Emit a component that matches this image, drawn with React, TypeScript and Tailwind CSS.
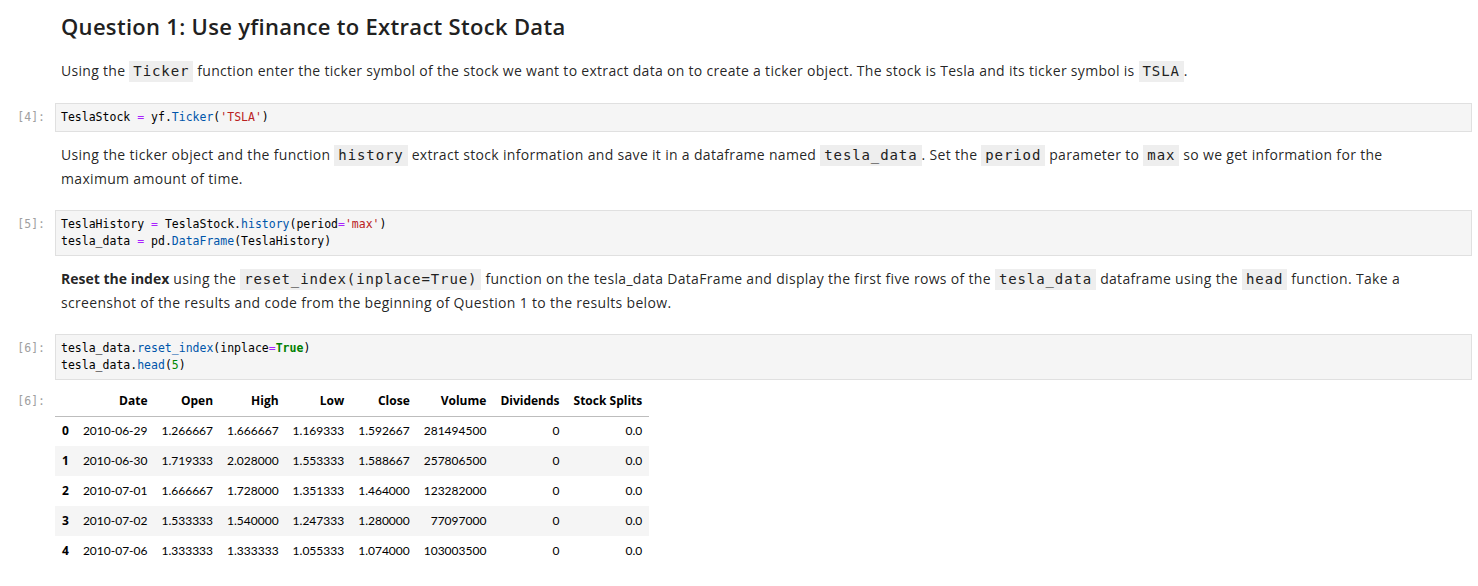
import React from 'react';

type Row = [string, string, string, string, string, string, string, string];

const rows: Row[] = [
  ['2010-06-29', '1.266667', '1.666667', '1.169333', '1.592667', '281494500', '0', '0.0'],
  ['2010-06-30', '1.719333', '2.028000', '1.553333', '1.588667', '257806500', '0', '0.0'],
  ['2010-07-01', '1.666667', '1.728000', '1.351333', '1.464000', '123282000', '0', '0.0'],
  ['2010-07-02', '1.533333', '1.540000', '1.247333', '1.280000', '77097000', '0', '0.0'],
  ['2010-07-06', '1.333333', '1.333333', '1.055333', '1.074000', '103003500', '0', '0.0'],
];

const headers = ['Date', 'Open', 'High', 'Low', 'Close', 'Volume', 'Dividends', 'Stock Splits'];

function Code({ children }: { children: React.ReactNode }) {
  return (
    <code className="inline-block bg-[#eeeeee] px-[4px] text-[14px] leading-[21px] tracking-[0.9px] text-[#212121] [font-family:'DejaVu_Sans_Mono',monospace]">
      {children}
    </code>
  );
}

function Prompt({ n, top }: { n: number; top: string }) {
  return (
    <div
      className={`w-[55px] shrink-0 pr-[10px] text-right text-[11.5px] leading-[17px] text-[#a0a0a0] [font-family:'DejaVu_Sans_Mono',monospace] ${top}`}
    >
      [{n}]:
    </div>
  );
}

function CodeCell({ n, children }: { n: number; children: React.ReactNode }) {
  return (
    <div className="flex">
      <Prompt n={n} top="pt-[6px]" />
      <div className="mr-[6px] flex-1 border border-[#e0e0e0] bg-[#f5f5f5] px-[5px] py-[5px] text-[11.5px] leading-[17px] text-[#000] [font-family:'DejaVu_Sans_Mono',monospace] whitespace-pre">
        {children}
      </div>
    </div>
  );
}

const op = 'text-[#aa22ff]';
const prop = 'text-[#0055aa]';
const str = 'text-[#ba2121]';
const num = 'text-[#008800]';

export default function App() {
  return (
    <div className="h-[586px] w-full overflow-hidden bg-white text-[rgba(0,0,0,0.87)] [font-family:'Open_Sans',sans-serif]">
      {/* markdown: heading + intro */}
      <div className="pl-[61px] pr-[36px] pt-[12px] pb-[20px]">
        <h2 className="text-[22px] font-semibold leading-[28px] tracking-[0.3px] text-[#212121]">
          Question 1: Use yfinance to Extract Stock Data
        </h2>
        <p className="mt-[19px] text-[14px] leading-[24px] tracking-[0.3px]">
          Using the <Code>Ticker</Code> function enter the ticker symbol of the stock we want to extract data on to
          create a ticker object. The stock is Tesla and its ticker symbol is <Code>TSLA</Code>.
        </p>
      </div>

      <CodeCell n={4}>
        TeslaStock <span className={op}>=</span> yf.<span className={prop}>Ticker</span>(
        <span className={str}>'TSLA'</span>)
      </CodeCell>

      <div className="pl-[61px] pr-[36px] pt-[11px] pb-[19px]">
        <p className="text-[14px] leading-[24px] tracking-[0.32px]">
          Using the ticker object and the function <Code>history</Code> extract stock information and save it in a
          dataframe named <Code>tesla_data</Code>. Set the <Code>period</Code> parameter to <Code>max</Code> so we get
          information for the maximum amount of time.
        </p>
      </div>

      <CodeCell n={5}>
        TeslaHistory <span className={op}>=</span> TeslaStock.<span className={prop}>history</span>(period
        <span className={op}>=</span>
        <span className={str}>'max'</span>)
        {'\n'}tesla_data <span className={op}>=</span> pd.<span className={prop}>DataFrame</span>(TeslaHistory)
      </CodeCell>

      <div className="pl-[61px] pr-[36px] pt-[11px] pb-[19px]">
        <p className="text-[14px] leading-[24px] tracking-[0.32px]">
          <strong className="font-bold tracking-normal">Reset the index</strong> using the{' '}
          <Code>reset_index(inplace=True)</Code> function on the tesla_data DataFrame and display the first five rows of
          the <Code>tesla_data</Code> dataframe using the <Code>head</Code> function. Take a screenshot of the results and
          code from the beginning of Question 1 to the results below.
        </p>
      </div>

      <CodeCell n={6}>
        tesla_data.<span className={prop}>reset_index</span>(inplace<span className={op}>=</span>
        <span className="font-bold text-[#008000]">True</span>)
        {'\n'}tesla_data.<span className={prop}>head</span>(<span className={num}>5</span>)
      </CodeCell>

      {/* output */}
      <div className="mt-[6px] flex">
        <Prompt n={6} top="pt-[7px]" />
        <table className="border-collapse text-[12px] text-[#000] [font-family:Lato,sans-serif]">
          <thead>
            <tr className="h-[30px] border-b border-[#bdbdbd]">
              <th className="px-[7px]"></th>
              {headers.map(h => (
                <th key={h} className="px-[7px] text-right font-bold [font-family:'Open_Sans',sans-serif]">
                  {h}
                </th>
              ))}
            </tr>
          </thead>
          <tbody>
            {rows.map((r, i) => (
              <tr key={i} className={`h-[30px] ${i % 2 === 1 ? 'bg-[#f5f5f5]' : ''}`}>
                <th className="px-[7px] text-left font-bold [font-family:'Open_Sans',sans-serif]">{i}</th>
                {r.map((v, j) => (
                  <td key={j} className="px-[7px] text-right">
                    {v}
                  </td>
                ))}
              </tr>
            ))}
          </tbody>
        </table>
      </div>
    </div>
  );
}
